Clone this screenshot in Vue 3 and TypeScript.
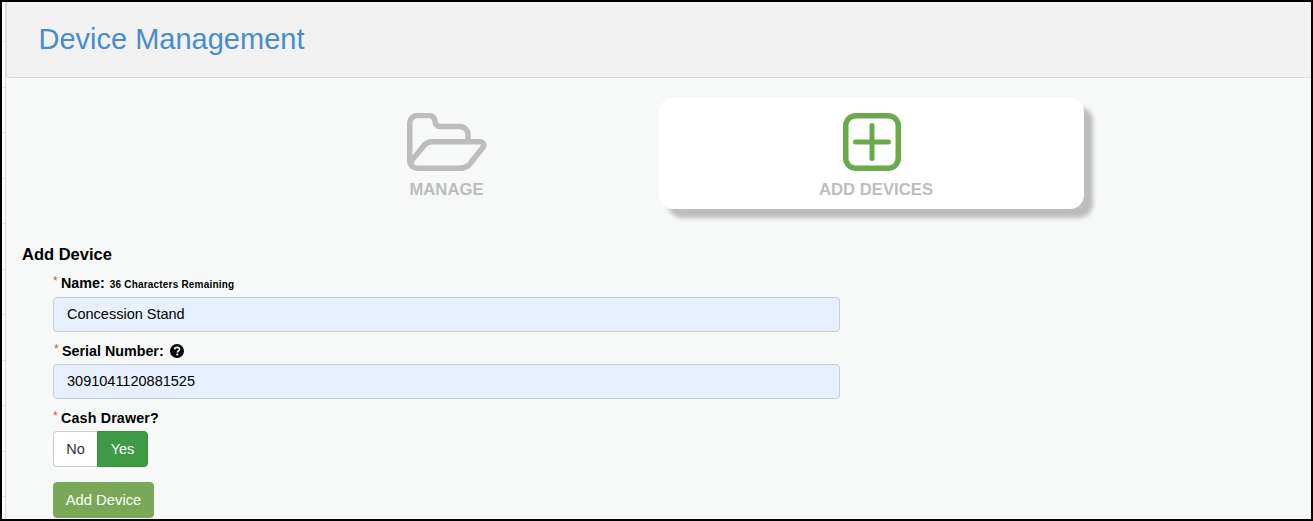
<script setup lang="ts">
const title: string = 'Device Management'
</script>

<template>
  <div class="frame">
    <div class="gutter"></div>
    <main class="page">
      <header class="head"><h1>{{ title }}</h1></header>
      <nav class="tabs">
        <div class="tab">
          <svg class="icon" viewBox="0 1 80 60" width="80" height="60">
            <path d="M2.750 49V11a7.500 7.500 0 0 1 7.500-7.500H22a6 6 0 0 1 6 6a5 5 0 0 0 5 5H53a8 8 0 0 1 8 8V26" fill="none" stroke="#bdbdbd" stroke-width="5.500" stroke-linecap="round" stroke-linejoin="round"/>
            <path d="M3.500 50L17 33.500Q20 29.750 25 29.750H73a3.500 3.500 0 0 1 3 5.500L62 53Q58 56.250 52 56.250H10.250a7.500 7.500 0 0 1-7.500-7.500" fill="none" stroke="#bdbdbd" stroke-width="5.500" stroke-linecap="round" stroke-linejoin="round"/>
          </svg>
          <span>MANAGE</span>
        </div>
        <div class="tab active">
          <svg class="icon" viewBox="0 0 58 60" width="58" height="60">
            <rect x="2.750" y="2.750" width="52.500" height="52.500" rx="10" fill="none" stroke="#69ab4b" stroke-width="5.500"/>
            <path d="M29 12.500v33M12.500 29h33" fill="none" stroke="#69ab4b" stroke-width="5" stroke-linecap="round"/>
          </svg>
          <span>ADD DEVICES</span>
        </div>
      </nav>
      <section class="form">
        <h2>Add Device</h2>
        <div class="fields">
          <label class="label first"><i>*</i><b>Name:</b><small>36 Characters Remaining</small></label>
          <div class="input">Concession Stand</div>
          <label class="label second"><i>*</i><b>Serial Number:</b>
            <svg class="help" viewBox="0 0 14 14" width="14" height="14">
              <circle cx="7" cy="7" r="7" fill="#000"/>
              <path d="M4.600 5.400C4.700 4 5.700 3.300 7 3.300c1.400 0 2.500.8 2.500 2 0 1.700-2.100 1.700-2.100 3.100" fill="none" stroke="#f7f9f9" stroke-width="1.700"/>
              <rect x="6.300" y="9.500" width="2" height="1.900" fill="#f7f9f9"/>
            </svg>
          </label>
          <div class="input">3091041120881525</div>
          <label class="label third"><i>*</i><b>Cash Drawer?</b></label>
          <div class="toggle"><span class="no">No</span><span class="yes">Yes</span></div>
          <button class="submit" type="button">Add Device</button>
        </div>
      </section>
    </main>
  </div>
</template>

<style>
html, body { margin: 0; background: #fff; }
</style>

<style scoped>
.frame {
  box-sizing: border-box;
  width: 1313px;
  height: 521px;
  border: 2px solid #000;
  display: flex;
  overflow: hidden;
  font-family: "Liberation Sans", Arial, sans-serif;
  color: #000;
}
.gutter {
  width: 3px;
  flex: none;
  background: repeating-linear-gradient(to bottom, #fff 0 39.5px, #e2e2e2 39.5px 40.5px, #fff 40.5px 45.5px);
}
.page {
  flex: 1;
  min-width: 0;
  background: #f7f9f9;
  border-left: 1px solid #dedede;
}
.head {
  box-sizing: border-box;
  height: 76px;
  background: #f2f2f2;
  border-left: 1px solid #ddd;
  border-bottom: 1px solid #dcdcdc;
  border-bottom-left-radius: 3px;
  padding: 20px 0 0 31.500px;
}
h1 {
  margin: 0;
  font-size: 29px;
  line-height: 35px;
  font-weight: 400;
  color: #4a8ccb;
}
.tabs {
  display: flex;
  height: 111px;
  margin-top: 20px;
}
.tab {
  display: flex;
  flex-direction: column;
  align-items: center;
  color: #bdbdbd;
  font-weight: 700;
  font-size: 16.700px;
}
.tab:first-child {
  width: 425px;
  margin-left: 228px;
}
.tab.active {
  width: 425px;
  margin-left: 0;
  background: #fff;
  border-radius: 14px;
  box-shadow: 9px 9px 4px #bdbdbd;
}
.icon { margin-top: 15px; }
.tab span { margin-top: 8px; line-height: 18px; }
.tab.active span { padding-left: 9px; }
.form { padding: 0 0 0 16px; margin-top: 35px; }
h2 {
  margin: 0;
  font-size: 16.500px;
  line-height: 20px;
  font-weight: 700;
}
.fields { margin-left: 31px; width: 787px; margin-top: 9px; }
.label {
  display: flex;
  align-items: baseline;
  height: 20px;
  font-size: 14.300px;
  line-height: 20px;
}
.label.first { height: 21px; }
.label i {
  font-style: normal;
  font-size: 12px;
  color: #c4603a;
  width: 8px;
  position: relative;
  top: -3px;
}
.label b { margin-right: 5px; }
.label small { font-size: 10px; font-weight: 700; letter-spacing: .2px; }
.help { align-self: center; margin-left: 1px; }
.input {
  box-sizing: border-box;
  height: 35px;
  margin-top: 3px;
  background: #e8f0fe;
  border: 1px solid #c8ced6;
  border-radius: 4px;
  padding: 0 13px;
  font-size: 14.500px;
  line-height: 33px;
}
.second { margin-top: 9px; padding-left: 1px; }
.third { margin-top: 9px; letter-spacing: .15px; }
.toggle {
  display: flex;
  width: 95px;
  height: 36px;
  margin-top: 3px;
  font-size: 14.500px;
  line-height: 34px;
  text-align: center;
}
.no {
  box-sizing: border-box;
  width: 44px;
  background: #fff;
  border: 1px solid #ccc;
  border-right: 0;
  border-radius: 4px 0 0 4px;
  color: #333;
}
.yes {
  box-sizing: border-box;
  width: 51px;
  background: #3e9a45;
  border: 1px solid #3a8f41;
  border-radius: 0 4px 4px 0;
  color: #fff;
}
.submit {
  display: block;
  width: 101px;
  height: 36px;
  margin-top: 15px;
  padding: 0;
  background: #79a958;
  border: 1px solid #79a958;
  border-radius: 4px;
  color: #fff;
  font: 14.800px "Liberation Sans", Arial, sans-serif;
}
</style>
